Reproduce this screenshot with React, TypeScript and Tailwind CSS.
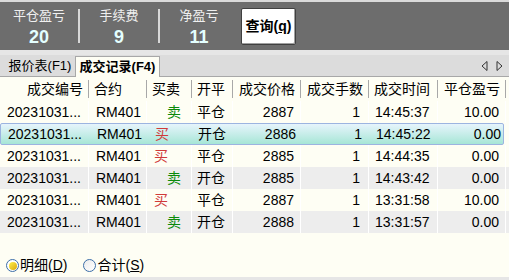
import React from 'react'

interface Trade {
    id: string
    contract: string
    side: 'buy' | 'sell'
    offset: string
    price: string
    qty: string
    time: string
    pnl: string
}

const TRADES: Trade[] = [
    { id: '20231031...', contract: 'RM401', side: 'sell', offset: '平仓', price: '2887', qty: '1', time: '14:45:37', pnl: '10.00' },
    { id: '20231031...', contract: 'RM401', side: 'buy', offset: '开仓', price: '2886', qty: '1', time: '14:45:22', pnl: '0.00' },
    { id: '20231031...', contract: 'RM401', side: 'buy', offset: '平仓', price: '2885', qty: '1', time: '14:44:35', pnl: '0.00' },
    { id: '20231031...', contract: 'RM401', side: 'sell', offset: '开仓', price: '2885', qty: '1', time: '14:43:42', pnl: '0.00' },
    { id: '20231031...', contract: 'RM401', side: 'buy', offset: '平仓', price: '2887', qty: '1', time: '13:31:58', pnl: '10.00' },
    { id: '20231031...', contract: 'RM401', side: 'sell', offset: '开仓', price: '2888', qty: '1', time: '13:31:57', pnl: '0.00' },
]

const HEADERS: { label: string; align: 'left' | 'right' }[] = [
    { label: '成交编号', align: 'right' },
    { label: '合约', align: 'left' },
    { label: '买卖', align: 'left' },
    { label: '开平', align: 'left' },
    { label: '成交价格', align: 'right' },
    { label: '成交手数', align: 'right' },
    { label: '成交时间', align: 'left' },
    { label: '平仓盈亏', align: 'right' },
]

const GRID = 'grid grid-cols-[89px_58px_45px_41px_68px_68px_69px_68px]'

const Stat = ({ label, value }: { label: string; value: string }) => (
    <div className="w-[78px] flex flex-col items-center pt-[6px]">
        <span className="text-[13px] leading-[16px] text-[#f0f0f0]">{label}</span>
        <span className="text-[18px] leading-[20px] font-bold text-[#e4ffff] mt-[3px]">{value}</span>
    </div>
)

const Sep = () => <div className="w-[2px] h-[34px] mt-[7px] bg-[#d8d8d8]" />

export default function App() {
    return (
        <div className="w-[509px] h-[280px] flex flex-col bg-[#fefef4] overflow-hidden font-['Liberation_Sans','Noto_Sans_CJK_SC',sans-serif] text-black">
            {/* summary bar */}
            <div className="h-[2px] bg-[#dadada]" />
            <div className="h-[48px] bg-[#6d6d6d] flex items-start">
                <Stat label="平仓盈亏" value="20" />
                <Sep />
                <Stat label="手续费" value="9" />
                <Sep />
                <Stat label="净盈亏" value="11" />
                <button className="ml-[3px] mt-[6px] w-[55px] h-[37px] bg-white border border-[#404040] rounded-[2px] shadow-[inset_-1px_-1px_0_#a0a0a0] text-[14px] font-bold flex items-center justify-center whitespace-nowrap">
                    查询(<span className="underline">q</span>)
                </button>
            </div>

            {/* tabs */}
            <div className="h-[5px] bg-[#e6e6e6]" />
            <div className="h-[22px] bg-[#dcdcdc] flex items-end border-b border-[#a8a8a8] relative">
                <div className="ml-[5px] w-[70px] h-[20px] flex items-center justify-center text-[13px]">报价表(F1)</div>
                <div className="w-[85px] h-[21px] -mb-px bg-[#fefef4] border border-b-0 border-[#a8a8a8] flex items-center justify-center text-[13px] font-bold">
                    成交记录(F4)
                </div>
                <div className="absolute right-[6px] top-[6px] flex gap-[8px]">
                    <svg width="7" height="10" viewBox="0 0 7 10"><path d="M6 0.5 L1 5 L6 9.5 Z" fill="none" stroke="#333" strokeWidth="1" /></svg>
                    <svg width="7" height="10" viewBox="0 0 7 10"><path d="M1 0.5 L6 5 L1 9.5 Z" fill="none" stroke="#333" strokeWidth="1" /></svg>
                </div>
            </div>

            {/* header */}
            <div className={`${GRID} h-[24px] text-[14px]`}>
                {HEADERS.map(h => (
                    <div key={h.label} className="flex items-center">
                        <span
                            className={`flex-1 whitespace-nowrap ${h.align === 'right' ? 'text-right pr-[5px]' : 'text-left pl-[5px]'}`}
                        >
                            {h.label}
                        </span>
                        <span className="w-px h-[18px] bg-[#a8a8a8]" />
                    </div>
                ))}
            </div>

            {/* rows */}
            <div className="flex flex-col text-[14px]">
                {TRADES.map((t, i) => {
                    const selected = i === 1
                    const rowBg = selected
                        ? 'bg-gradient-to-b from-[#e6f4fc] to-[#a6e6d6] border border-[#9cb4e0] rounded-[2px]'
                        : i % 2 === 1
                            ? 'bg-[#ededed]'
                            : 'bg-[#fefef4]'
                    const cell = selected ? 'flex items-center whitespace-nowrap' : 'flex items-center whitespace-nowrap border-r border-white'
                    return (
                        <div key={i} className={`${GRID} h-[22px] ${rowBg} ${selected ? 'w-[504px]' : ''}`}>
                            <div className={`${cell} pl-[7px]`}>{t.id}</div>
                            <div className={`${cell} pl-[7px]`}>{t.contract}</div>
                            {t.side === 'sell' ? (
                                <div className={`${cell} justify-end pr-[10px] text-[#0a8a0a]`}>卖</div>
                            ) : (
                                <div className={`${cell} pl-[7px] text-[#d03a3a]`}>买</div>
                            )}
                            <div className={`${cell} pl-[5px]`}>{t.offset}</div>
                            <div className={`${cell} justify-end pr-[6px]`}>{t.price}</div>
                            <div className={`${cell} justify-end pr-[8px]`}>{t.qty}</div>
                            <div className={`${cell} pl-[6px]`}>{t.time}</div>
                            <div className={`${cell} justify-end pr-[6px]`}>{t.pnl}</div>
                        </div>
                    )
                })}
            </div>

            {/* footer */}
            <div className="flex-1 flex items-end pb-px pl-[6px] text-[14px]">
                <div className="flex items-center">
                    <span className="w-[13px] h-[13px] rounded-full border border-[#3c6ea8] bg-white flex items-center justify-center">
                        <span className="w-[8px] h-[8px] rounded-full bg-gradient-to-br from-[#fff24a] to-[#d8a800]" />
                    </span>
                    <span className="ml-px">明细(<span className="underline">D</span>)</span>
                </div>
                <div className="flex items-center ml-[16px]">
                    <span className="w-[13px] h-[13px] rounded-full border border-[#3c6ea8] bg-gradient-to-br from-[#ececec] to-white" />
                    <span className="ml-px">合计(<span className="underline">S</span>)</span>
                </div>
            </div>
            <div className="h-[3px] bg-[#e6e6e6]" />
        </div>
    )
}
